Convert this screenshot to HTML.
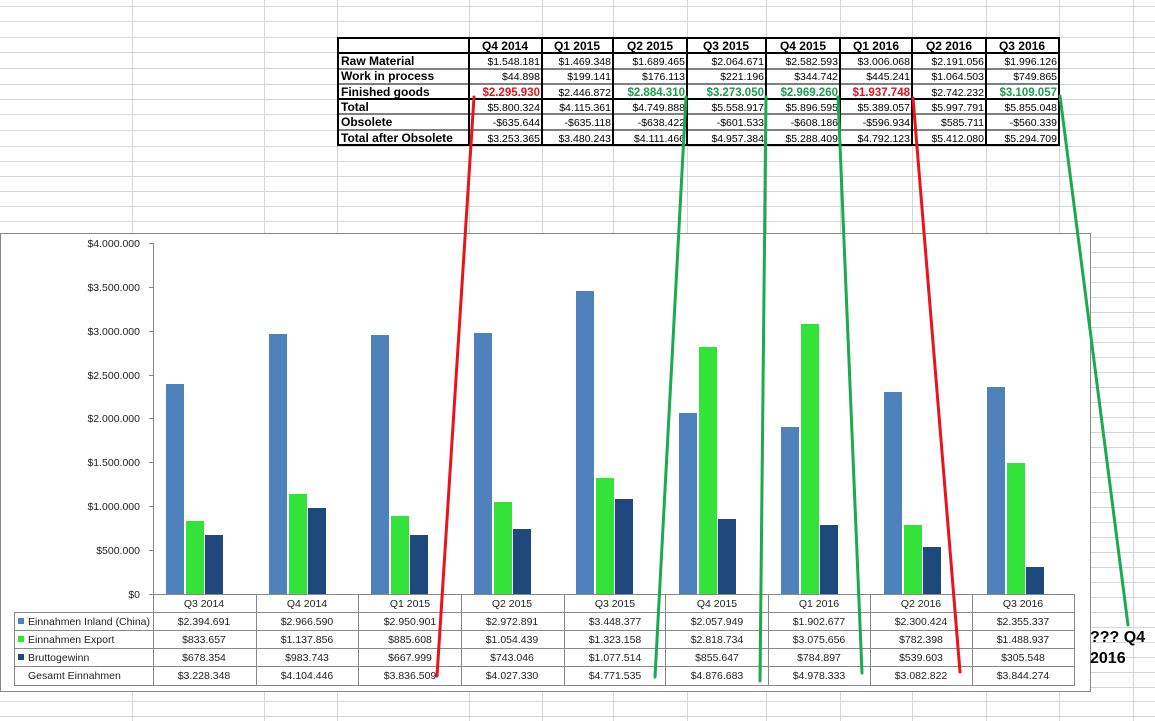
<!DOCTYPE html>
<html><head><meta charset="utf-8"><style>
html,body{margin:0;padding:0;background:#fff;width:1155px;height:721px;overflow:hidden}
svg{display:block}
.t{font-family:"Liberation Sans",sans-serif;font-size:10.5px;fill:#000}
.b{font-weight:bold}
.l{font-family:"Liberation Sans",sans-serif;font-size:12px;font-weight:bold;fill:#000}
.c{font-family:"Liberation Sans",sans-serif;font-size:10.5px;fill:#222}
</style></head><body>
<svg width="1155" height="721" xmlns="http://www.w3.org/2000/svg">
<!-- grid -->
<g stroke="#d6d6d6" stroke-width="1">
<line x1="0" y1="6.5" x2="1155" y2="6.5"/><line x1="0" y1="21.5" x2="1155" y2="21.5"/>
<line x1="0" y1="37.5" x2="1155" y2="37.5"/><line x1="0" y1="52.5" x2="1155" y2="52.5"/>
<line x1="0" y1="68.5" x2="1155" y2="68.5"/><line x1="0" y1="84.5" x2="1155" y2="84.5"/>
<line x1="0" y1="99.5" x2="1155" y2="99.5"/><line x1="0" y1="114.5" x2="1155" y2="114.5"/>
<line x1="0" y1="130.5" x2="1155" y2="130.5"/><line x1="0" y1="146.5" x2="1155" y2="146.5"/>
<line x1="0" y1="161.5" x2="1155" y2="161.5"/><line x1="0" y1="176.5" x2="1155" y2="176.5"/>
<line x1="0" y1="191.5" x2="1155" y2="191.5"/><line x1="0" y1="206.5" x2="1155" y2="206.5"/>
<line x1="0" y1="221.5" x2="1155" y2="221.5"/><line x1="0" y1="237.5" x2="1155" y2="237.5"/>
<line x1="0" y1="252.5" x2="1155" y2="252.5"/><line x1="0" y1="267.5" x2="1155" y2="267.5"/>
<line x1="0" y1="282.5" x2="1155" y2="282.5"/><line x1="0" y1="297.5" x2="1155" y2="297.5"/>
<line x1="0" y1="312.5" x2="1155" y2="312.5"/><line x1="0" y1="327.5" x2="1155" y2="327.5"/>
<line x1="0" y1="342.5" x2="1155" y2="342.5"/><line x1="0" y1="357.5" x2="1155" y2="357.5"/>
<line x1="0" y1="372.5" x2="1155" y2="372.5"/><line x1="0" y1="387.5" x2="1155" y2="387.5"/>
<line x1="0" y1="402.5" x2="1155" y2="402.5"/><line x1="0" y1="417.5" x2="1155" y2="417.5"/>
<line x1="0" y1="432.5" x2="1155" y2="432.5"/><line x1="0" y1="447.5" x2="1155" y2="447.5"/>
<line x1="0" y1="462.5" x2="1155" y2="462.5"/><line x1="0" y1="477.5" x2="1155" y2="477.5"/>
<line x1="0" y1="492.5" x2="1155" y2="492.5"/><line x1="0" y1="507.5" x2="1155" y2="507.5"/>
<line x1="0" y1="522.5" x2="1155" y2="522.5"/><line x1="0" y1="537.5" x2="1155" y2="537.5"/>
<line x1="0" y1="552.5" x2="1155" y2="552.5"/><line x1="0" y1="567.5" x2="1155" y2="567.5"/>
<line x1="0" y1="582.5" x2="1155" y2="582.5"/><line x1="0" y1="597.5" x2="1155" y2="597.5"/>
<line x1="0" y1="612.5" x2="1155" y2="612.5"/><line x1="0" y1="627.5" x2="1155" y2="627.5"/>
<line x1="0" y1="642.5" x2="1155" y2="642.5"/><line x1="0" y1="657.5" x2="1155" y2="657.5"/>
<line x1="0" y1="672.5" x2="1155" y2="672.5"/><line x1="0" y1="687.5" x2="1155" y2="687.5"/>
<line x1="0" y1="701.5" x2="1155" y2="701.5"/><line x1="0" y1="716.5" x2="1155" y2="716.5"/>
<line x1="132.5" y1="0" x2="132.5" y2="721"/><line x1="264.5" y1="0" x2="264.5" y2="721"/>
<line x1="337.5" y1="0" x2="337.5" y2="721"/><line x1="469.5" y1="0" x2="469.5" y2="721"/>
<line x1="542.5" y1="0" x2="542.5" y2="721"/><line x1="613.5" y1="0" x2="613.5" y2="721"/>
<line x1="687.5" y1="0" x2="687.5" y2="721"/><line x1="766.5" y1="0" x2="766.5" y2="721"/>
<line x1="840.5" y1="0" x2="840.5" y2="721"/><line x1="912.5" y1="0" x2="912.5" y2="721"/>
<line x1="986.5" y1="0" x2="986.5" y2="721"/><line x1="1059.5" y1="0" x2="1059.5" y2="721"/>
<line x1="1133.5" y1="0" x2="1133.5" y2="721"/>
</g>
<!-- top table -->
<rect x="338" y="38" width="721" height="108" fill="#fff"/>
<g stroke="#000">
<g stroke-width="1">
<line x1="338" y1="69" x2="1059" y2="69"/><line x1="338" y1="84" x2="1059" y2="84"/>
<line x1="338" y1="114" x2="1059" y2="114"/><line x1="338" y1="130" x2="1059" y2="130"/>
</g>
<g stroke-width="2">
<rect x="338" y="38" width="721" height="107" fill="none"/>
<line x1="338" y1="53" x2="1059" y2="53"/><line x1="338" y1="99" x2="1059" y2="99"/>
<line x1="469" y1="38" x2="469" y2="145"/><line x1="542" y1="38" x2="542" y2="145"/>
<line x1="613" y1="38" x2="613" y2="145"/><line x1="687" y1="38" x2="687" y2="145"/>
<line x1="766" y1="38" x2="766" y2="145"/><line x1="840" y1="38" x2="840" y2="145"/>
<line x1="912" y1="38" x2="912" y2="145"/><line x1="986" y1="38" x2="986" y2="145"/>
</g></g>
<g class="l">
<text x="341" y="65">Raw Material</text><text x="341" y="80">Work in process</text>
<text x="341" y="96">Finished goods</text><text x="341" y="111">Total</text>
<text x="341" y="126">Obsolete</text><text x="341" y="142">Total after Obsolete</text>
</g>
<g class="l" text-anchor="middle">
<text x="505" y="50">Q4 2014</text><text x="577" y="50">Q1 2015</text><text x="650" y="50">Q2 2015</text>
<text x="726" y="50">Q3 2015</text><text x="803" y="50">Q4 2015</text><text x="876" y="50">Q1 2016</text>
<text x="949" y="50">Q2 2016</text><text x="1022" y="50">Q3 2016</text>
</g>
<g class="t" text-anchor="end">
<text x="540" y="65">$1.548.181</text><text x="611" y="65">$1.469.348</text><text x="685" y="65">$1.689.465</text><text x="764" y="65">$2.064.671</text><text x="838" y="65">$2.582.593</text><text x="910" y="65">$3.006.068</text><text x="984" y="65">$2.191.056</text><text x="1057" y="65">$1.996.126</text>
<text x="540" y="80">$44.898</text><text x="611" y="80">$199.141</text><text x="685" y="80">$176.113</text><text x="764" y="80">$221.196</text><text x="838" y="80">$344.742</text><text x="910" y="80">$445.241</text><text x="984" y="80">$1.064.503</text><text x="1057" y="80">$749.865</text>
<text x="540" y="96" class="b" font-size="11.5" fill="#e3141c">$2.295.930</text><text x="611" y="96">$2.446.872</text><text x="685" y="96" class="b" font-size="11.5" fill="#1e9c4b">$2.884.310</text><text x="764" y="96" class="b" font-size="11.5" fill="#1e9c4b">$3.273.050</text><text x="838" y="96" class="b" font-size="11.5" fill="#1e9c4b">$2.969.260</text><text x="910" y="96" class="b" font-size="11.5" fill="#e3141c">$1.937.748</text><text x="984" y="96">$2.742.232</text><text x="1057" y="96" class="b" font-size="11.5" fill="#1e9c4b">$3.109.057</text>
<text x="540" y="111">$5.800.324</text><text x="611" y="111">$4.115.361</text><text x="685" y="111">$4.749.888</text><text x="764" y="111">$5.558.917</text><text x="838" y="111">$5.896.595</text><text x="910" y="111">$5.389.057</text><text x="984" y="111">$5.997.791</text><text x="1057" y="111">$5.855.048</text>
<text x="540" y="126">-$635.644</text><text x="611" y="126">-$635.118</text><text x="685" y="126">-$638.422</text><text x="764" y="126">-$601.533</text><text x="838" y="126">-$608.186</text><text x="910" y="126">-$596.934</text><text x="984" y="126">$585.711</text><text x="1057" y="126">-$560.339</text>
<text x="540" y="142">$3.253.365</text><text x="611" y="142">$3.480.243</text><text x="685" y="142">$4.111.466</text><text x="764" y="142">$4.957.384</text><text x="838" y="142">$5.288.409</text><text x="910" y="142">$4.792.123</text><text x="984" y="142">$5.412.080</text><text x="1057" y="142">$5.294.709</text>
</g>
<!-- chart -->
<rect x="0.5" y="233.5" width="1090" height="458" fill="#fff" stroke="#888"/>
<g stroke="#888">
<line x1="153.5" y1="243" x2="153.5" y2="594"/>
<line x1="149" y1="243.5" x2="153" y2="243.5"/><line x1="149" y1="287.5" x2="153" y2="287.5"/>
<line x1="149" y1="331.5" x2="153" y2="331.5"/><line x1="149" y1="375.5" x2="153" y2="375.5"/>
<line x1="149" y1="418.5" x2="153" y2="418.5"/><line x1="149" y1="462.5" x2="153" y2="462.5"/>
<line x1="149" y1="506.5" x2="153" y2="506.5"/><line x1="149" y1="550.5" x2="153" y2="550.5"/>
<line x1="149" y1="594.5" x2="153" y2="594.5"/>
</g>
<g class="c" text-anchor="end">
<text x="140" y="247">$4.000.000</text><text x="140" y="291">$3.500.000</text><text x="140" y="335">$3.000.000</text>
<text x="140" y="379">$2.500.000</text><text x="140" y="422">$2.000.000</text><text x="140" y="466">$1.500.000</text>
<text x="140" y="510">$1.000.000</text><text x="140" y="554">$500.000</text><text x="140" y="598">$0</text>
</g>
<g>
<g fill="#4f81bd">
<rect x="166" y="384" width="18" height="210"/><rect x="269" y="334" width="18" height="260"/><rect x="371" y="335" width="18" height="259"/>
<rect x="474" y="333" width="18" height="261"/><rect x="576" y="291" width="18" height="303"/><rect x="679" y="413" width="18" height="181"/>
<rect x="781" y="427" width="18" height="167"/><rect x="884" y="392" width="18" height="202"/><rect x="987" y="387" width="18" height="207"/>
</g>
<g fill="#33e33a">
<rect x="186" y="521" width="18" height="73"/><rect x="289" y="494" width="18" height="100"/><rect x="391" y="516" width="18" height="78"/>
<rect x="494" y="502" width="18" height="92"/><rect x="596" y="478" width="18" height="116"/><rect x="699" y="347" width="18" height="247"/>
<rect x="801" y="324" width="18" height="270"/><rect x="904" y="525" width="18" height="69"/><rect x="1007" y="463" width="18" height="131"/>
</g>
<g fill="#1f497d">
<rect x="205" y="535" width="18" height="59"/><rect x="308" y="508" width="18" height="86"/><rect x="410" y="535" width="18" height="59"/>
<rect x="513" y="529" width="18" height="65"/><rect x="615" y="499" width="18" height="95"/><rect x="718" y="519" width="18" height="75"/>
<rect x="820" y="525" width="18" height="69"/><rect x="923" y="547" width="18" height="47"/><rect x="1026" y="567" width="18" height="27"/>
</g>
</g>
<!-- data table -->
<g stroke="#888" fill="none">
<line x1="153" y1="594.5" x2="1075" y2="594.5"/>
<rect x="14.5" y="612.5" width="1060" height="73"/>
<line x1="14" y1="630.5" x2="1075" y2="630.5"/><line x1="14" y1="648.5" x2="1075" y2="648.5"/><line x1="14" y1="666.5" x2="1075" y2="666.5"/>
<line x1="153.5" y1="594" x2="153.5" y2="686"/><line x1="256.5" y1="594" x2="256.5" y2="686"/><line x1="358.5" y1="594" x2="358.5" y2="686"/>
<line x1="461.5" y1="594" x2="461.5" y2="686"/><line x1="564.5" y1="594" x2="564.5" y2="686"/><line x1="665.5" y1="594" x2="665.5" y2="686"/>
<line x1="768.5" y1="594" x2="768.5" y2="686"/><line x1="870.5" y1="594" x2="870.5" y2="686"/><line x1="972.5" y1="594" x2="972.5" y2="686"/>
<line x1="1074.5" y1="594" x2="1074.5" y2="612"/>
</g>
<rect x="18" y="618" width="6" height="6" fill="#4f81bd"/><rect x="18" y="636" width="6" height="6" fill="#33e33a"/><rect x="18" y="654" width="6" height="6" fill="#1f497d"/>
<g class="c">
<text x="28" y="625">Einnahmen Inland (China)</text><text x="28" y="643">Einnahmen Export</text>
<text x="28" y="661">Bruttogewinn</text><text x="28" y="679">Gesamt Einnahmen</text>
</g>
<g class="c" text-anchor="middle">
<text x="204" y="607">Q3 2014</text><text x="307" y="607">Q4 2014</text><text x="410" y="607">Q1 2015</text><text x="512" y="607">Q2 2015</text><text x="615" y="607">Q3 2015</text><text x="717" y="607">Q4 2015</text><text x="819" y="607">Q1 2016</text><text x="921" y="607">Q2 2016</text><text x="1023" y="607">Q3 2016</text>
<text x="204" y="625">$2.394.691</text><text x="307" y="625">$2.966.590</text><text x="410" y="625">$2.950.901</text><text x="512" y="625">$2.972.891</text><text x="615" y="625">$3.448.377</text><text x="717" y="625">$2.057.949</text><text x="819" y="625">$1.902.677</text><text x="921" y="625">$2.300.424</text><text x="1023" y="625">$2.355.337</text>
<text x="204" y="643">$833.657</text><text x="307" y="643">$1.137.856</text><text x="410" y="643">$885.608</text><text x="512" y="643">$1.054.439</text><text x="615" y="643">$1.323.158</text><text x="717" y="643">$2.818.734</text><text x="819" y="643">$3.075.656</text><text x="921" y="643">$782.398</text><text x="1023" y="643">$1.488.937</text>
<text x="204" y="661">$678.354</text><text x="307" y="661">$983.743</text><text x="410" y="661">$667.999</text><text x="512" y="661">$743.046</text><text x="615" y="661">$1.077.514</text><text x="717" y="661">$855.647</text><text x="819" y="661">$784.897</text><text x="921" y="661">$539.603</text><text x="1023" y="661">$305.548</text>
<text x="204" y="679">$3.228.348</text><text x="307" y="679">$4.104.446</text><text x="410" y="679">$3.836.509</text><text x="512" y="679">$4.027.330</text><text x="615" y="679">$4.771.535</text><text x="717" y="679">$4.876.683</text><text x="819" y="679">$4.978.333</text><text x="921" y="679">$3.082.822</text><text x="1023" y="679">$3.844.274</text>
</g>
<!-- annotation lines -->
<g stroke-width="3" stroke-linecap="round">
<line x1="474" y1="97" x2="437" y2="676" stroke="#e8141c"/>
<line x1="913" y1="98" x2="960" y2="672" stroke="#e8141c"/>
<line x1="686" y1="97" x2="655" y2="677" stroke="#1aaa50"/>
<line x1="766" y1="97" x2="760" y2="681" stroke="#1aaa50"/>
<line x1="838" y1="97" x2="862" y2="673" stroke="#1aaa50"/>
<line x1="1060" y1="96" x2="1128" y2="625" stroke="#1aaa50"/>
</g>
<g font-family="Liberation Sans,sans-serif" font-weight="bold" font-size="16" fill="#000">
<text x="1090" y="642">??? Q4</text><text x="1090" y="663">2016</text>
</g>
</svg>
</body></html>
